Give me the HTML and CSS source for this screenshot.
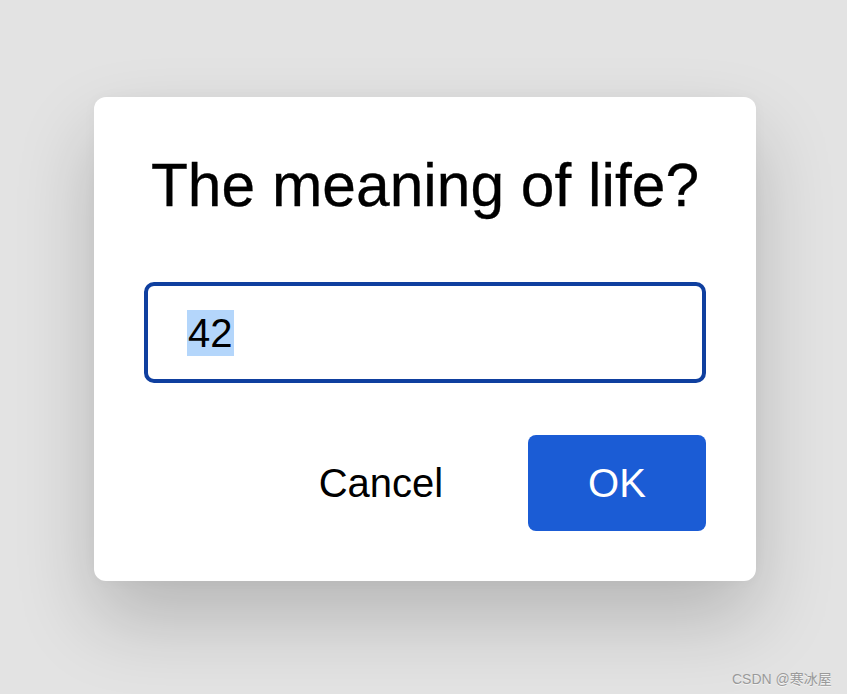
FILE: index.html
```html
<!DOCTYPE html>
<html>
<head>
<meta charset="utf-8">
<link rel="stylesheet" href="styles.css">
</head>
<body>
<div class="stage">
  <div class="dialog">
    <h1 class="title">The meaning of life?</h1>
    <div class="field"><span class="sel">42</span></div>
    <div class="actions">
      <button class="btn cancel">Cancel</button>
      <button class="btn ok">OK</button>
    </div>
  </div>
  <div class="watermark">CSDN @寒冰屋</div>
</div>
</body>
</html>
```
FILE: styles.css
```css
html, body {
  margin: 0;
  padding: 0;
}
body {
  background: #e3e3e3;
  font-family: "Liberation Sans", Arial, "Noto Sans CJK SC", sans-serif;
}
.stage {
  position: relative;
  width: 847px;
  height: 694px;
  overflow: hidden;
  padding-top: 97px;
  box-sizing: border-box;
}
.dialog {
  margin-left: 94px;
  width: 662px;
  height: 484px;
  box-sizing: border-box;
  background: #fff;
  border-radius: 12px;
  box-shadow: 0 38px 80px rgba(0, 0, 0, 0.2), 0 0 14px rgba(0, 0, 0, 0.03);
  padding: 53px 50px 50px;
  display: flex;
  flex-direction: column;
  align-items: center;
}
.title {
  margin: 0;
  font-size: 60.5px;
  line-height: 70px;
  font-weight: normal;
  color: #000;
  text-align: center;
  white-space: nowrap;
  -webkit-text-stroke: 0.3px #000;
}
.field {
  margin-top: 62px;
  width: 562px;
  height: 101px;
  box-sizing: border-box;
  border: 4px solid #0f3f9f;
  border-radius: 10px;
  padding-left: 39px;
  display: flex;
  align-items: center;
}
.sel {
  font-size: 40px;
  line-height: 46px;
  background: #b4d6fb;
  color: #000;
  padding: 0 1px;
}
.actions {
  margin-top: 52px;
  width: 562px;
  display: flex;
  justify-content: flex-end;
  gap: 58px;
}
.btn {
  width: 178px;
  height: 96px;
  border: none;
  border-radius: 8px;
  font-family: "Liberation Sans", Arial, sans-serif;
  font-size: 40px;
  padding: 0;
  cursor: pointer;
}
.cancel {
  background: transparent;
  color: #000;
}
.ok {
  background: #1b5cd5;
  color: #fff;
}
.watermark {
  position: absolute;
  left: 732px;
  top: 668px;
  font-size: 14px;
  color: #9a9a9a;
  text-shadow: 0 1px 0 rgba(255, 255, 255, 0.6);
  white-space: nowrap;
}
```
